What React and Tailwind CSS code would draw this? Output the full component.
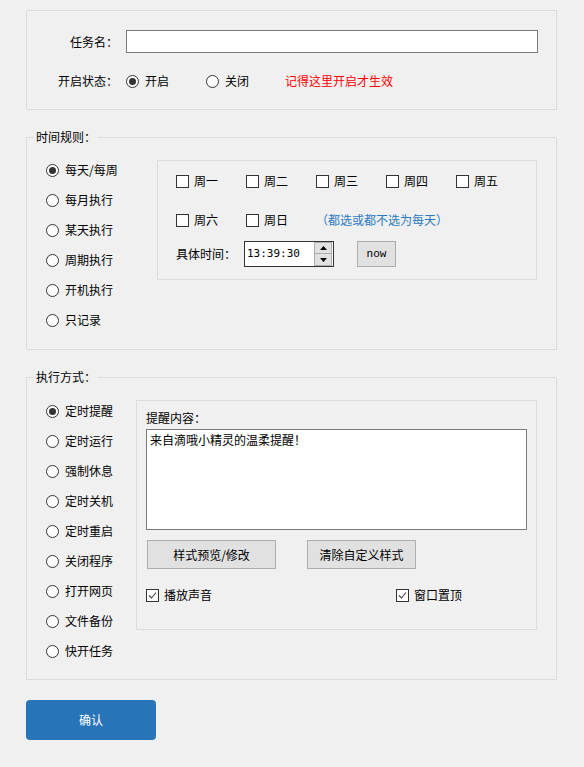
import React, { useState } from 'react';

const FONT = { fontFamily: '"Noto Sans CJK SC", "Noto Sans", sans-serif' };

function Radio({ checked, label, onClick }) {
  return (
    <label onClick={onClick} className="flex items-center gap-[6px] cursor-default select-none">
      <span className="w-[13px] h-[13px] rounded-full border border-[#333] bg-white flex items-center justify-center">
        {checked && <span className="w-[7px] h-[7px] rounded-full bg-[#333]" />}
      </span>
      <span>{label}</span>
    </label>
  );
}

function Check({ checked, label, onClick }) {
  return (
    <label onClick={onClick} className="flex items-center gap-[5px] cursor-default select-none">
      <span className="w-[13px] h-[13px] border border-[#333] bg-white flex items-center justify-center">
        {checked && (
          <svg width="11" height="11" viewBox="0 0 11 11">
            <path d="M2 5.5 L4.5 8 L9 2.5" fill="none" stroke="#444" strokeWidth="1.1" />
          </svg>
        )}
      </span>
      <span>{label}</span>
    </label>
  );
}

const RULES = ['每天/每周', '每月执行', '某天执行', '周期执行', '开机执行', '只记录'];
const MODES = ['定时提醒', '定时运行', '强制休息', '定时关机', '定时重启', '关闭程序', '打开网页', '文件备份', '快开任务'];
const DAYS = ['周一', '周二', '周三', '周四', '周五'];

export default function App() {
  const [enabled, setEnabled] = useState(true);
  const [rule, setRule] = useState(0);
  const [mode, setMode] = useState(0);
  const [sound, setSound] = useState(true);
  const [top, setTop] = useState(true);

  return (
    <div style={FONT} className="min-h-[767px] w-[584px] bg-[#f0f0f0] text-[12px] leading-[16px] text-black pl-[26px] pt-[10px]">
      {/* Task name / status */}
      <div className="w-[531px] h-[100px] border border-[#dcdcdc] pt-[19px]">
        <div className="flex items-center h-[23px]">
          <span className="w-[91px] text-right">任务名：</span>
          <input className="ml-[8px] w-[412px] h-[23px] border border-[#7a7a7a] bg-white outline-none px-1" />
        </div>
        <div className="flex items-center mt-[20px] h-[16px]">
          <span className="w-[99px] pl-[31px]">开启状态：</span>
          <div className="w-[80px]">
            <Radio checked={enabled} label="开启" onClick={() => setEnabled(true)} />
          </div>
          <div className="w-[79px]">
            <Radio checked={!enabled} label="关闭" onClick={() => setEnabled(false)} />
          </div>
          <span className="text-[#ff0000]">记得这里开启才生效</span>
        </div>
      </div>

      {/* Time rules */}
      <fieldset className="mt-[19px] w-[531px] h-[221px] border border-[#dcdcdc] flex">
        <legend className="ml-[7px] px-[2px]">时间规则：</legend>
        <div className="w-[130px] pl-[19px] pt-[10px] flex flex-col">
          {RULES.map((r, i) => (
            <div key={r} className="h-[30px] flex items-center">
              <Radio checked={rule === i} label={r} onClick={() => setRule(i)} />
            </div>
          ))}
        </div>
        <div className="mt-[15px] w-[380px] h-[120px] border border-[#dcdcdc] pl-[18px] pt-[12px]">
          <div className="flex h-[16px] items-center">
            {DAYS.map((d) => (
              <div key={d} className="w-[70px]">
                <Check label={d} />
              </div>
            ))}
          </div>
          <div className="flex h-[16px] items-center mt-[23px]">
            <div className="w-[70px]"><Check label="周六" /></div>
            <div className="w-[70px]"><Check label="周日" /></div>
            <span className="text-[#2a7bc2]">（都选或都不选为每天）</span>
          </div>
          <div className="flex items-center mt-[13px] h-[26px]">
            <span className="w-[68px]">具体时间：</span>
            <div className="w-[90px] h-[26px] border border-[#333] bg-white flex items-center">
              <span className="flex-1 pl-[2px]" style={{ fontFamily: '"DejaVu Sans Mono", monospace', fontSize: '11px' }}>13:39:30</span>
              <div className="w-[18px] h-[24px] flex flex-col mr-[1px]">
                <button className="h-[12px] border border-[#adadad] bg-[#e1e1e1] flex items-center justify-center">
                  <svg width="7" height="4" viewBox="0 0 7 4"><path d="M3.5 0 L7 4 L0 4 Z" fill="#000" /></svg>
                </button>
                <button className="h-[12px] border border-[#adadad] border-t-0 bg-[#e1e1e1] flex items-center justify-center">
                  <svg width="7" height="4" viewBox="0 0 7 4"><path d="M0 0 L7 0 L3.5 4 Z" fill="#000" /></svg>
                </button>
              </div>
            </div>
            <button className="ml-[23px] w-[39px] h-[26px] border border-[#adadad] bg-[#e1e1e1] text-[11px]" style={{ fontFamily: '"Liberation Mono", monospace' }}>
              now
            </button>
          </div>
        </div>
      </fieldset>

      {/* Execution mode */}
      <fieldset className="mt-[19px] w-[531px] h-[311px] border border-[#dcdcdc] flex">
        <legend className="ml-[7px] px-[2px]">执行方式：</legend>
        <div className="w-[109px] pl-[19px] pt-[11px] flex flex-col">
          {MODES.map((m, i) => (
            <div key={m} className="h-[30px] flex items-center">
              <Radio checked={mode === i} label={m} onClick={() => setMode(i)} />
            </div>
          ))}
        </div>
        <div className="mt-[15px] w-[401px] h-[230px] border border-[#dcdcdc] pl-[9px] pt-[9px]">
          <div className="h-[16px]">提醒内容：</div>
          <textarea
            defaultValue="来自滴哦小精灵的温柔提醒！"
            className="mt-[3px] block w-[381px] h-[101px] border border-[#7a7a7a] bg-white px-[3px] py-[2px] resize-none outline-none"
          />
          <div className="flex mt-[10px]">
            <button className="ml-px w-[129px] h-[29px] border border-[#adadad] bg-[#e1e1e1]">样式预览/修改</button>
            <button className="ml-[31px] w-[109px] h-[29px] border border-[#adadad] bg-[#e1e1e1]">清除自定义样式</button>
          </div>
          <div className="flex items-center mt-[18px] h-[16px]">
            <div className="w-[250px]">
              <Check checked={sound} label="播放声音" onClick={() => setSound(!sound)} />
            </div>
            <Check checked={top} label="窗口置顶" onClick={() => setTop(!top)} />
          </div>
        </div>
      </fieldset>

      <button className="mt-[20px] w-[130px] h-[40px] rounded-[4px] bg-[#2874b8] text-white">确认</button>
    </div>
  );
}
